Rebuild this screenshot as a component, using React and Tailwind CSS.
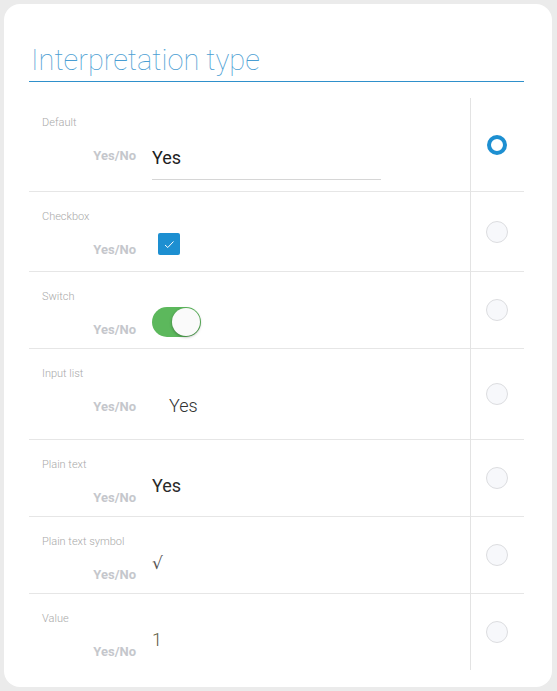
import React from "react";

function Radio({ checked }) {
  return checked ? (
    <div className="w-[20px] h-[20px] rounded-full border-[4px] border-[#1d8fd1] bg-white" />
  ) : (
    <div className="w-[22px] h-[22px] rounded-full border border-[#dcdde0] bg-[#f7f8fb]" />
  );
}

function Row({ label, h, valueMt, value, checked, last }) {
  return (
    <div className={`flex ${h} ${last ? "" : "border-b border-[#e6e6e6]"}`}>
      <div className="flex-1 flex flex-col pt-[18px]">
        <div className="h-[14px] leading-[14px] pl-[13px] text-[11px] font-light text-[#a9a9a9]">{label}</div>
        <div className="flex items-start">
          <div className="w-[107px] shrink-0 text-right mt-[18px] text-[13px] leading-[16px] font-bold text-[#c5c7cc]">
            Yes/No
          </div>
          <div className={`ml-[16px] ${valueMt}`}>{value}</div>
        </div>
      </div>
      <div className="w-[54px] shrink-0 flex items-center justify-center">
        <Radio checked={checked} />
      </div>
    </div>
  );
}

export default function App() {
  const rows = [
    {
      label: "Default",
      h: "h-[94px]",
      valueMt: "mt-[16px]",
      checked: true,
      value: (
        <div className="w-[229px] h-[34px] border-b border-[#d6d6d6] text-[18px] leading-[24px] text-[#1e1e1e]">
          Yes
        </div>
      ),
    },
    {
      label: "Checkbox",
      h: "h-[80px]",
      valueMt: "mt-[9px]",
      value: (
        <div className="ml-[6px] w-[22px] h-[22px] rounded-[2px] bg-[#1d8fd1] flex items-center justify-center">
          <svg width="14" height="14" viewBox="0 0 14 14" fill="none">
            <path d="M3 8 L5.8 10.5 L11.5 4.5" stroke="white" strokeWidth="1" />
          </svg>
        </div>
      ),
    },
    {
      label: "Switch",
      h: "h-[77px]",
      valueMt: "mt-[3px]",
      value: (
        <div className="w-[49px] h-[30px] rounded-full bg-[#5cb85c] relative">
          <div className="absolute right-[1px] top-[1px] w-[28px] h-[28px] rounded-full bg-[#fafafa] shadow-[0_1px_3px_rgba(0,0,0,0.35)]" />
        </div>
      ),
    },
    {
      label: "Input list",
      h: "h-[91px]",
      valueMt: "mt-[13px]",
      value: (
        <div className="ml-[17px] text-[18px] leading-[24px] font-light text-[#333]">Yes</div>
      ),
    },
    {
      label: "Plain text",
      h: "h-[77px]",
      valueMt: "mt-[2px]",
      value: <div className="text-[18px] leading-[24px] text-[#2a2a2a]">Yes</div>,
    },
    {
      label: "Plain text symbol",
      h: "h-[77px]",
      valueMt: "mt-[2px]",
      value: (
        <div className="text-[17px] leading-[24px] text-[#555] [font-family:'DejaVu_Serif',serif]">√</div>
      ),
    },
    {
      label: "Value",
      h: "h-[76px]",
      valueMt: "mt-[2px]",
      value: <div className="text-[18px] leading-[24px] font-light text-[#5a5a3e]">1</div>,
    },
  ];
  return (
    <div className="w-[557px] h-[691px] bg-[#ebebeb] p-[4px] [font-family:Roboto,'Liberation_Sans',sans-serif]">
      <div className="w-[548px] h-[683px] bg-white rounded-[16px] pl-[25px] pr-[28px] pt-[38px]">
        <div className="pl-[2px] pb-[3px] text-[29px] leading-[36px] font-thin text-[#4a9ed3]">Interpretation type</div>
        <div className="h-px bg-[#2f90cb]" />
        <div className="mt-[16px] relative">
          <div className="absolute left-[441px] top-0 bottom-0 w-px bg-[#e3e3e3]" />
          {rows.map((r, i) => (
            <Row key={i} {...r} last={i === rows.length - 1} />
          ))}
        </div>
      </div>
    </div>
  );
}
